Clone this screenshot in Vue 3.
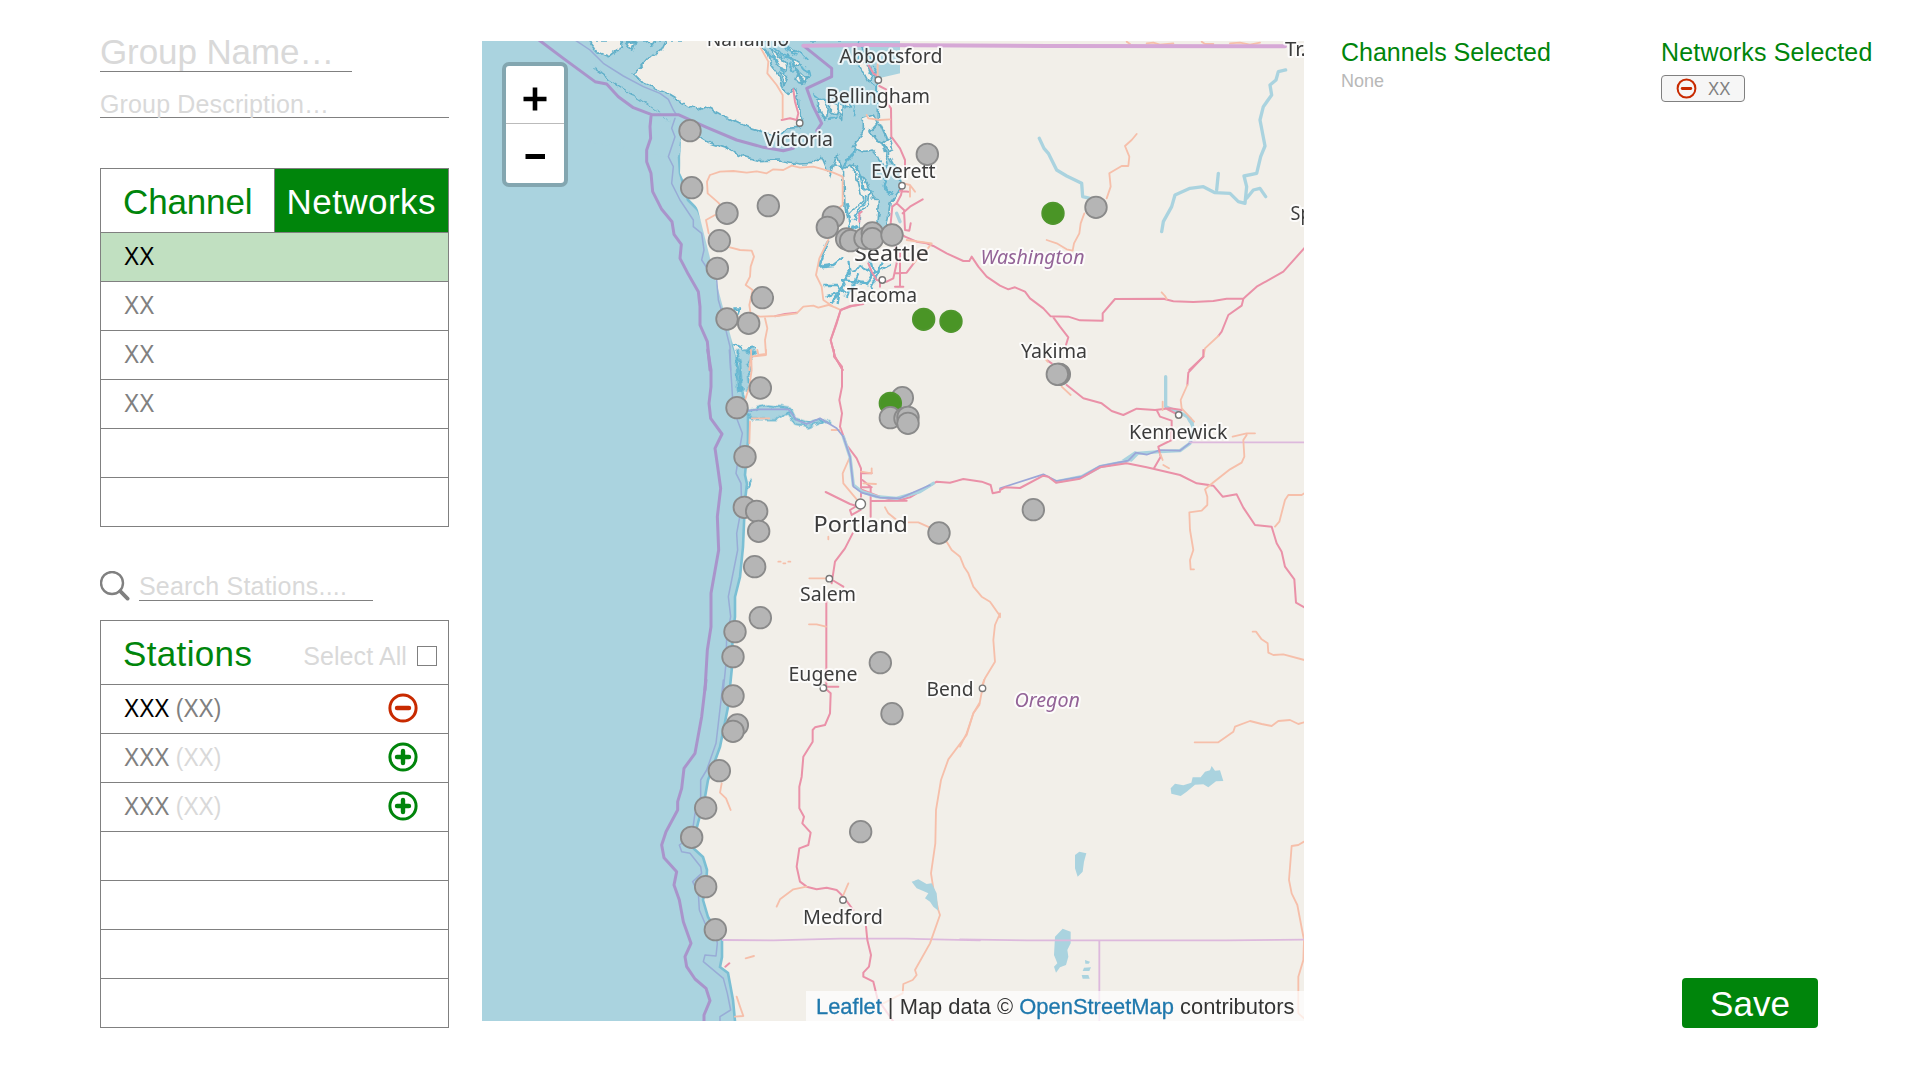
<script setup>
const networks = ['XX', 'XX', 'XX', 'XX', '', '']
const stations = [
  { code: 'XXX', net: '(XX)', on: true },
  { code: 'XXX', net: '(XX)', on: false },
  { code: 'XXX', net: '(XX)', on: false },
  null, null, null, null,
]

// Map sections: origin on the map canvas, geometry in thirds of a pixel
const sections = [
  {
    at: [480, 40],
    lines: [
      ['trunk', 'M1138 545V520L1145 515M1082 810L1070 850L1052 900L1065 950L1088 990M1082 810L1110 798L1135 795M905 240L930 235L950 240L955 220L945 185L940 148M885 829L915 822L950 818'],
      ['road', 'M840 20L865 65L862 100L890 135L908 165V235M683 460L681 425L690 405L720 395L760 393L800 398L830 394L860 400L880 388L910 390L935 377L960 383L1000 380L1030 388L1060 398L1088 410V495L1060 515M683 460L715 488L725 500M705 525L678 540L686 580M750 622L780 630L815 632L822 650L812 680L810 710L797 735L818 750L808 795L812 822L840 830L890 828L950 820L970 800L1000 797L1015 803L1045 795L1065 802L1082 810M1045 600L1018 655L1008 705L1025 740L1030 780L1060 800M855 835L862 865L855 900L858 945L830 948L812 950L808 990'],
      ['limit', 'M285 0L330 30L370 70L430 108L490 140L540 160L565 178L580 210L590 225M585 235L575 265L585 290L565 350L580 380L575 430L600 480L640 540L640 560L665 580L672 630L665 660L685 690M710 720L715 780L730 830L740 880L750 920L752 990'],
      ['border', 'M177 0L250 55L345 125L380 132L415 170L460 203L515 224H595L680 262L770 300L850 322L910 332L940 325M513 230L510 260L512 295L500 330V365L513 400L518 455L545 508L576 545L582 583L604 613L600 655L625 703L655 755L660 800V855L682 905L690 990'],
    ],
  },
  {
    at: [800, 40],
    lines: [
      ['trunk', 'M205 75L220 100L235 110M238 138L258 148L262 190L273 205L274 290L300 325L315 360V380M308 440L303 465L290 490L277 500L272 550L285 570L315 590M290 490L312 510L315 570M308 520L330 500L368 478M300 452L325 455M315 570L328 572L332 550M315 590L350 605L380 610L400 618L440 640L490 663H508L515 650L535 680L560 710L600 737L625 748L645 742L675 755L690 775L730 805L752 829L805 830L840 841L908 842V820L945 777L1090 776L1120 784L1180 786L1240 783L1280 776H1330L1370 740L1450 695L1515 622M760 832L780 860L805 892L798 915M1330 777L1325 797L1285 825L1265 875L1255 888M1210 950L1168 990M205 670L215 695L230 720L260 725L280 715L290 670L285 600M300 640V740M285 740H310M320 660L345 665L320 698L285 700M240 725V740M122 810L160 797L190 792M122 810L92 900L105 950L128 990'],
      ['road', 'M233 70V108M200 225L205 235L240 240L270 238M310 430L330 435L345 455M330 440V470M320 600L395 610L380 630L340 670M1010 282L995 300L975 318L988 350L985 378L965 378L928 400L932 440L920 475M853 520L842 550L838 580L822 610L818 632L800 628L770 610L740 600M1085 757L1095 768L1100 777M1255 888L1215 925L1210 950M980 5L990 12M1040 10L1060 8L1080 14L1120 10M1205 5L1215 12H1240M1290 10L1320 8L1350 14L1380 8'],
      ['river', 'M718 295L732 325L745 340L770 390L800 408L845 430L848 470L870 475M1457 90L1435 95L1428 120L1410 135L1415 165L1390 200L1380 240L1395 318L1382 350L1370 400L1332 408L1340 440L1335 490L1315 485L1290 460L1245 458L1210 440L1170 445L1125 465L1115 500L1090 545L1085 575M1255 400L1250 450M1340 475L1360 450L1380 445L1397 470M290 520L300 545'],
      ['border', 'M50 272L65 250L40 200L20 145L95 110V85L10 17'],
      ['state thick', 'M10 17L200 15L740 18L1455 19'],
    ],
  },
  {
    at: [680, 350],
    lines: [
      ['trunk', 'M462 0V20L486 50V110L478 150L486 190L480 230L500 285L530 325L543 355V440M545 370H575M547 390L572 410V500M547 420L600 440L650 452L690 442L770 395L810 398L850 387L905 395L932 405L938 430L960 425M545 412H575M575 453L680 452M437 426L510 462L530 468L510 480L515 495L542 480M518 550L495 595L465 635L455 700M457 690L490 710M439 755V1020'],
      ['road', 'M213 0L215 60L208 110L195 150M210 215L208 280M232 0L235 15L258 12V0M215 205L268 205M508 325L488 370L490 400L540 460M615 472L625 490L650 510M685 517H715L755 535M800 575L815 600L840 620L852 650L865 670L880 710L905 740L930 755L958 795L945 825L940 870L945 935L915 985L907 1005M388 685H440M387 823H410L438 830M543 365L575 370V355M550 400L588 402M455 240H480M445 560V568M295 635H302M310 640H316M325 635H331'],
      ['limit', 'M148 0L155 100L158 150L172 210L187 250L180 290L168 370L183 400L185 470L170 550L173 600L155 690L145 740L152 800L140 860L138 940L130 1020'],
      ['river', 'M490 260L510 320L520 405L545 425L590 440L650 445L720 425L760 400'],
      ['rivline', 'M205 182L240 178H325L350 210L380 222L420 205L470 235L490 260L510 320L520 410L545 428L600 443L660 445L750 405'],
      ['border', 'M83 0L93 60V110L87 160L92 205L126 252L105 295L113 350L122 415L112 500L116 600L93 730V830L82 900L75 1020'],
    ],
  },
  {
    at: [1000, 350],
    lines: [
      ['river', 'M497 80V170L545 190L570 205L580 235L570 280L540 302L480 305L410 310L375 335L300 350L245 380L170 395'],
      ['lake', 'M555 195L582 215L580 235L565 215ZM365 330L405 303L418 312L395 335Z'],
      ['rivline', 'M575 275L540 302L480 300L440 314L408 308L385 332L300 348L245 380L170 393L130 373L0 415'],
      ['state', 'M570 277H913'],
      ['trunk', 'M0 420L15 412L60 414L130 377L145 380L168 398L240 386L300 352L380 340L440 352L540 375L590 400L640 407L668 440L710 433L730 473L765 525L815 530L830 580L845 605L855 650L883 688L888 758L913 772M143 32L155 40M200 105L250 145L305 160L335 183L370 195L410 176L465 180L510 175L545 180M610 0V20L565 68L562 105M470 180L480 200L515 212V270L475 290L482 320L462 355M497 175L530 192'],
      ['road', 'M135 25L143 35M185 110L212 135M562 105L542 150L545 175L582 215M488 155V180M480 310L488 330M490 345L507 355M698 260L740 250H765M740 255L730 270L733 320L725 338L690 358L630 405L615 418L622 440V465L605 482L568 487L570 540L580 600L570 630L572 658H582M913 430L905 435H865L855 450L838 515L825 530M758 845H768L785 868L803 880L805 908L820 915L850 913L913 930M0 790V802'],
    ],
  },
  {
    at: [640, 680],
    lines: [
      ['state', 'M248 780L400 781L600 776H800L1020 781'],
      ['trunk', 'M550 20L572 40L570 100L555 135L525 142L518 150V185L490 230L485 290L478 320V385L492 410L487 430L512 458L505 495L478 505L470 560L480 605L500 620L530 628L560 623L590 630L610 650L640 690M550 20H595M678 740L682 780L693 825L687 860L670 878V890L700 905L712 955L760 1025M256 860L268 850'],
      ['road', 'M1018 70L1000 100L980 165L925 238L903 300L888 390L886 490L873 580L880 625L895 690L900 705L870 790L825 870L830 885L818 900L790 912L788 940L730 970M245 310L240 338L258 355L272 390M500 620L460 628L420 658L410 680M625 610L610 645M317 835L342 828M290 950L300 980L310 1008L285 1010'],
      ['limit', 'M250 0L235 130L228 190L200 270L182 300V350L165 400L155 470L118 495L125 515L150 520L182 560L185 580L158 605L175 640L178 690L195 730L225 755L232 790L228 828L195 825L190 845L250 895L262 940L272 990L240 1010V1025'],
      ['border', 'M198 0L185 110L165 220L132 265L125 325L113 365V390L78 455L65 495L72 533L110 575L102 615L118 660L130 725L153 790L135 830L140 860L165 897L198 925L210 962L192 1005V1025'],
      ['lake', 'M815 605L835 598L860 612L875 610L890 640L895 692L880 680L870 665L855 655L865 640L848 632L830 625Z'],
    ],
  },
  {
    at: [960, 680],
    lines: [
      ['road', 'M72 0L58 75L40 100L20 160L0 200M704 187H775L820 155L825 140L870 123L905 132L935 138L955 123L990 120L1015 132L1032 127M1032 485L1015 495L995 498L987 600L995 640L1012 675L1032 780L1030 840L1015 890V1000L1032 1015'],
      ['lake', 'M632 325L645 311L670 316L694 308L698 292L722 292L735 275L750 271L755 258L765 272L780 271L790 303L768 304L745 322L730 313L705 314L680 335L662 348L634 341Z'],
      ['lake', 'M345 525L358 515L379 520L372 545L368 575L353 590L345 565Z'],
      ['lake', 'M285 770L308 746L332 755V790L322 810L325 830L318 855L300 862L288 878L282 860L292 850L282 825Z'],
      ['lake', 'M375 840L390 845L386 851H376ZM372 863L393 862L388 873H368ZM365 885H385L389 896H368Z'],
      ['state', 'M0 778L200 781H800L1032 779M418 781V1025'],
    ],
  },
]

const coast = 'M482 41H1040L655 130L681 137L679 157L680 173L688 200L698 210L705 227L710 247L713 270L722 280L725 300L728 317L733 330L733 345L738 360L743 395L748 412L748 440L745 475L747 484L745 500L743 547L740 577L735 597L735 617L732 637L733 657L730 687L728 707L720 747L708 780L705 797L698 823L692 847L703 857L707 870L706 887L703 900L708 917L722 940L722 957L720 967L728 973L733 1000L735 1021H482Z'
const strait = 'M330 0H1135L1150 30L1130 60L1165 70L1175 105L1195 118V240L1218 290L1222 340L1260 410L1265 440L1230 490L1222 550L1212 600L1190 610L1180 560L1195 520L1160 430L1120 375L1090 385L1060 375L1050 408L1025 350L1000 370L960 372L900 360L840 362L790 350L740 325L690 310L640 280L600 290L540 220L330 80Z'

// Land inside the strait and the sound
const isles = [
  'M560 0L545 30L512 48L480 85L460 100L490 130L560 160L610 190L655 208L675 198L720 222L800 260L850 275L895 290L922 265L960 262L968 235L957 215L955 175L942 148L925 160L908 145L895 105L875 78L860 35L830 0Z',
  'M330 10L350 35L385 50L410 30L430 22L425 0H335Z',
  'M500 0L510 22L525 0Z', 'M440 8L455 30L465 5Z',
  'M870 25L915 65L920 90L895 80Z', 'M925 48L960 70L945 82Z', 'M900 95L925 110L912 135Z',
  'M950 88L985 118L970 125Z', 'M915 15L945 30L940 42Z', 'M955 100L965 130L948 125Z',
  'M1010 180L1030 175L1045 205L1040 235L1015 215Z', 'M1052 188L1072 198L1068 225L1050 218Z',
  'M1075 182L1090 190L1088 235L1072 222Z', 'M1100 170L1112 200L1100 205Z',
  'M1130 60L1148 45L1160 70L1175 110L1165 125Z',
  'M1150 235L1180 225L1193 250L1170 275L1188 300L1205 310L1225 370L1215 385L1198 350L1180 330L1150 335L1120 325L1150 265Z',
  'M1205 310L1230 290L1238 330L1222 335Z',
  'M1090 385L1110 375L1130 405L1148 480L1100 530L1095 500Z',
  'M1142 520L1165 490L1170 460L1195 490L1192 540L1180 590L1145 600L1140 560Z',
  'M1070 340L1085 380L1060 378Z',
]
const creeks = 'M1045 600L1018 680L1060 675L1090 652M1105 665L1110 700L1085 740L1055 790M1030 735H1070L1095 765M1040 768L1075 758L1070 795M1115 690L1150 680L1170 705L1200 690L1235 672M1085 720L1130 725L1165 730M1135 700L1120 730L1100 770M1170 660L1180 700L1160 735M1205 660L1195 700L1170 745M1100 490L1110 540L1100 575L1135 560M1160 470L1145 500L1120 540M760 805H780L775 825M760 915L790 930L825 925M790 930L800 960L795 990M775 945L770 980M1090 385L1110 350L1130 330M1130 375L1150 440L1180 460M1225 400L1210 440L1235 460'
const archipelago = 'M850 28L870 50L890 55L900 75M880 22L905 48L930 55L940 80M910 10L925 35L950 42M925 65L940 95L960 92M945 30L970 45L985 60M960 75L985 90L990 115M900 85L915 95L908 115M1000 160L1020 175L1050 185M1060 185L1095 180L1100 210M1050 235L1070 230M1110 165L1125 200L1120 230M1180 80L1190 95L1165 100M1170 130L1190 140L1185 170M1155 25L1165 50L1190 60'

const labels = [
  ['Nanaimo', 706.7, 46, 82.5, 19], ['Abbotsford', 839.5, 62.5, 103, 19], ['Bellingham', 826, 103, 104, 19],
  ['Victoria', 764, 145.8, 69, 19], ['Everett', 871, 177.8, 64.5, 19], ['Seattle', 854, 260.8, 75, 22.5],
  ['Tacoma', 847, 301.8, 70, 19], ['Yakima', 1021, 357.5, 66, 19], ['Kennewick', 1129, 438.7, 98.5, 19],
  ['Portland', 813.5, 532.3, 94.5, 22.5], ['Salem', 800, 600.7, 56, 19], ['Eugene', 788.5, 681.3, 69, 19],
  ['Bend', 926.5, 696, 47, 19], ['Medford', 803, 924, 80, 19],
  ['Tr.', 1285, 55.5, 21, 19], ['Sp', 1290.5, 220, 21, 19],
]
const regions = [['Washington', 980.5, 264, 104, 19], ['Oregon', 1014.5, 707, 65.5, 19]]
const towns = [[878.3, 80], [799.7, 123], [902, 185.7], [882.3, 280], [1178.7, 415], [829.3, 578.7], [823.3, 688], [982.5, 688.3], [843, 900]]

const pins = [
  { at: [480, 40], list: [[630, 272], [635, 443], [741, 520], [718, 602], [712, 685], [865, 497], [847, 773], [741, 837], [806, 850], [1060, 531], [1042, 562], [1100, 597], [1112, 602], [1155, 595], [1177, 579], [1177, 596], [1236, 585]] },
  { at: [800, 40], list: [[382, 343], [759, 520, 1], [888, 502], [371, 838, 1], [453, 844, 1]] },
  { at: [680, 350], list: [[241, 114], [171, 173], [195, 320], [193, 472], [230, 484], [236, 544], [224, 650], [241, 803], [165, 845], [159, 920], [667, 143], [631, 160, 1], [631, 203], [675, 205], [684, 202], [684, 220], [777, 549], [601, 938]] },
  { at: [1000, 350], list: [[178, 73], [176, 73], [172, 73], [100, 479]] },
  { at: [640, 680], list: [[279, 48], [292, 135], [279, 154], [238, 272], [197, 384], [155, 472], [197, 620], [226, 749], [756, 101], [662, 455]] },
].flatMap(g => g.list.map(([x, y, on]) => ({ x: g.at[0] + x / 3, y: g.at[1] + y / 3, on })))
</script>

<template>
  <main class="page">
    <aside class="side">
      <div class="field name"><span>Group Name…</span></div>
      <div class="field desc"><span>Group Description…</span></div>

      <section class="table networks">
        <div class="tabs">
          <div class="tab">Channel</div>
          <div class="tab active">Networks</div>
        </div>
        <div v-for="(n, i) in networks" :key="i" class="row" :class="{ selected: i === 0 }">
          <span class="code">{{ n }}</span>
        </div>
      </section>

      <div class="search">
        <svg width="30" height="30" viewBox="0 0 30 30" fill="none" stroke="#808080">
          <circle cx="12" cy="12" r="11" stroke-width="2.4" />
          <path d="M20.2 20.2L27.6 27.6" stroke-width="3.8" stroke-linecap="round" />
        </svg>
        <div class="field query"><span>Search Stations....</span></div>
      </div>

      <section class="table">
        <div class="head">
          <h2>Stations</h2>
          <span class="all">Select All</span>
          <i class="box"></i>
        </div>
        <div v-for="(s, i) in stations" :key="i" class="row" :class="{ on: s && s.on }">
          <template v-if="s">
            <span class="code">{{ s.code }}&nbsp;<em>{{ s.net }}</em></span>
            <svg class="toggle" width="30" height="30" viewBox="0 0 30 30" fill="none" :stroke="s.on ? '#c82a00' : '#00850b'">
              <circle cx="15" cy="15" r="13.1" stroke-width="3" />
              <path :d="s.on ? 'M9 15H21' : 'M9 15H21M15 9V21'" stroke-width="4.4" stroke-linecap="round" />
            </svg>
          </template>
        </div>
      </section>
    </aside>

    <section class="map">
      <svg class="canvas" width="822" height="980" viewBox="482 41 822 980">
        <defs>
          <filter id="ragged" x="-5%" y="-5%" width="110%" height="110%">
            <feTurbulence type="fractalNoise" baseFrequency="0.12" numOctaves="2" seed="4" result="n" />
            <feDisplacementMap in="SourceGraphic" in2="n" scale="7" xChannelSelector="R" yChannelSelector="G" />
          </filter>
        </defs>
        <rect x="482" y="41" width="822" height="980" fill="#f2efe9" />
        <path :d="coast" fill="#aad3df" />
        <path d="M655 132L681 137L679 157L680 173L688 200L698 210L705 227L710 247L713 270L722 280L725 300L728 317L733 330L733 345L738 360L743 395L748 412L748 440L745 475L747 484L745 500L743 547L740 577L735 597L735 617L732 637L733 657L730 687L728 707L720 747L708 780L705 797L698 823L692 847L703 857L707 870L706 887L703 900L708 917L722 940L722 957L720 967L728 973L733 1000L735 1021" class="shore" />
        <path d="M655 132L1050 41H900V430H760L748 400L733 345L713 270L698 210L680 173L681 137Z" fill="#f2efe9" />
        <g filter="url(#ragged)">
          <g transform="translate(480 40) scale(.33333)">
            <path :d="strait" class="coastline" />
            <path d="M-60 -60H340V90L540 220L605 285L597 350L560 350L300 300H-60Z" fill="#aad3df" />
            <path v-for="(d, i) in isles" :key="i" :d="d" class="isle" />
            <path :d="creeks" class="creek" />
            <path :d="archipelago" class="creek thin" />
          </g>
          <g transform="translate(680 350) scale(.33333)">
            <path d="M170 0H225L205 60L212 110L190 130L182 60Z" fill="#aad3df" />
            <path d="M168 0L180 40L185 125M200 0L225 10L205 40L210 110L195 125M170 45L178 128" class="creek" />
            <path d="M200 182L260 165L330 175L345 205L385 218L420 205L450 222L430 212L385 230L345 222L325 190L290 208L215 208Z" class="estuary" />
            <path d="M205 400L215 395L205 412" class="creek" />
          </g>
        </g>
        <g v-for="(s, i) in sections" :key="'s' + i" :transform="`translate(${s.at[0]} ${s.at[1]}) scale(.33333)`">
          <path v-for="(l, j) in s.lines" :key="j" :d="l[1]" :class="['line', l[0]]" />
        </g>
        <circle v-for="(t, i) in towns" :key="'t' + i" :cx="t[0]" :cy="t[1]" r="3.2" class="town" />
        <circle cx="860.5" cy="504" r="5" class="town" />
        <text v-for="l in labels" :key="l[0]" :x="l[1]" :y="l[2]" :textLength="l[3]" lengthAdjust="spacingAndGlyphs" :font-size="l[4]" class="label">{{ l[0] }}</text>
        <text v-for="l in regions" :key="l[0]" :x="l[1]" :y="l[2]" :textLength="l[3]" lengthAdjust="spacingAndGlyphs" :font-size="l[4]" class="label region">{{ l[0] }}</text>
        <circle v-for="(p, i) in pins" :key="'p' + i" :cx="p.x" :cy="p.y" r="10.8" class="pin" :class="{ on: p.on }" />
      </svg>
      <div class="zoom">
        <div><svg width="26" height="26" viewBox="0 0 26 26"><path d="M1.5 13H24.5M13 1.5V24.5" stroke="#000" stroke-width="4.6" /></svg></div>
        <div><svg width="26" height="26" viewBox="0 0 26 26"><path d="M3.5 12.5H23" stroke="#000" stroke-width="5" /></svg></div>
      </div>
      <div class="credit"><svg width="498" height="30"><text x="10" y="22.5" textLength="478.5" lengthAdjust="spacingAndGlyphs"><tspan class="link">Leaflet</tspan> | Map data © <tspan class="link">OpenStreetMap</tspan> contributors</text></svg></div>
    </section>

    <section class="picked">
      <div class="lists">
        <div class="list">
          <h3>Channels Selected</h3>
          <p>None</p>
        </div>
        <div class="list">
          <h3 class="wide">Networks Selected</h3>
          <div class="chip">
            <svg width="21" height="21" viewBox="0 0 21 21" fill="none" stroke="#c82a00">
              <ellipse cx="10.5" cy="10.5" rx="8.9" ry="9.1" stroke-width="2" />
              <path d="M6.2 10.5H14.8" stroke-width="2.8" stroke-linecap="round" />
            </svg>
            <span>XX</span>
          </div>
        </div>
      </div>
      <button class="save">Save</button>
    </section>
  </main>
</template>

<style>
body { background: #fff; }
</style>

<style scoped>
* { box-sizing: border-box; }
.page {
  display: flex;
  width: 1920px;
  height: 1080px;
  overflow: hidden;
  font-family: "Liberation Sans", Arial, sans-serif;
  font-size: 25px;
  color: #808080;
}
.side { width: 349px; margin-left: 100px; padding-top: 31px; }
.field { border-bottom: 1px solid #808080; color: #d9d9d9; white-space: nowrap; }
.name { width: 252px; height: 41px; font-size: 35px; line-height: 42px; letter-spacing: -0.1px; }
.desc { height: 46px; padding-top: 17px; line-height: 30px; letter-spacing: 0.15px; }
.table { border: 1px solid #808080; }
.networks { margin-top: 50px; }
.tabs, .head { display: flex; height: 63px; font-size: 35px; line-height: 66px; color: #00850b; }
.tab { width: 174px; padding-left: 22px; border-right: 1px solid #808080; white-space: nowrap; letter-spacing: -0.15px; }
.tab.active { background: #00850b; color: #fff; border: 0; padding-left: 12px; letter-spacing: 0.45px; }
.row {
  display: flex;
  justify-content: space-between;
  height: 49px;
  padding: 0 30px 0 23px;
  border-top: 1px solid #808080;
  line-height: 47px;
}
.selected { background: #c1e0c1; color: #000; }
.code { transform: scaleX(.91); transform-origin: 0 0; white-space: nowrap; }
.code em { font-style: normal; color: #d9d9d9; }
.on .code { color: #000; }
.on .code em { color: #808080; }
.toggle { margin-top: 8px; }
.search { display: flex; height: 30px; margin-top: 44px; }
.query { width: 234px; margin-left: 9px; line-height: 31px; letter-spacing: 0.2px; }
.search + .table { margin-top: 19px; }
.head { align-items: center; padding: 0 11px 0 22px; }
.head h2 { margin: 0; padding-top: 2px; font-size: 35px; font-weight: 400; line-height: 66px; letter-spacing: 0.35px; }
.all { margin-left: auto; font-size: 25px; line-height: 30px; padding-top: 6px; color: #d9d9d9; letter-spacing: 0.1px; }
.box { width: 20px; height: 20px; margin: 7px 0 0 10px; border: 1px solid #808080; }

.map { position: relative; width: 822px; height: 980px; margin: 41px 0 0 33px; overflow: hidden; }
.canvas { display: block; }
.shore { fill: none; stroke: #7bbfd4; stroke-width: 2.6; }
.coastline { fill: #aad3df; stroke: #62b0c9; stroke-width: 5; }
.isle { fill: #f2efe9; stroke: #62b0c9; stroke-width: 5; stroke-linejoin: round; }
.creek { fill: none; stroke: #62b5d0; stroke-width: 7; stroke-linejoin: round; }
.creek.thin { stroke-width: 5; }
.estuary { fill: #aad3df; stroke: #62b5d0; stroke-width: 5; }
.line { fill: none; stroke-linejoin: round; stroke-linecap: round; }
.trunk { stroke: #ea91a8; stroke-width: 6; }
.road { stroke: #f6bfaa; stroke-width: 5.5; }
.limit { stroke: #98acd6; stroke-width: 4.5; }
.border { stroke: #a994cb; stroke-width: 9; }
.state { stroke: #ddb9dd; stroke-width: 5.5; }
.state.thick { stroke: #d6a8d6; stroke-width: 12; }
.river { stroke: #aad3df; stroke-width: 10; }
.rivline { stroke: #9ba6d8; stroke-width: 5; }
.lake { fill: #aad3df; }
.town { fill: #fff; stroke: #777; stroke-width: 1.4; }
.label {
  font-family: "Noto Sans", sans-serif;
  fill: #3c3c3c;
  stroke: rgba(255, 255, 255, .75);
  stroke-width: 4px;
  stroke-linejoin: round;
  paint-order: stroke;
}
.region { fill: #936397; font-style: italic; }
.pin { fill: #b5b5b5; stroke: #8a8a8a; stroke-width: 1.8; }
.pin.on { fill: #4a9526; stroke: #4f962d; }
.zoom {
  position: absolute;
  left: 20px;
  top: 21px;
  width: 66px;
  height: 125px;
  border: 4px solid #83a6b0;
  border-radius: 7px;
  background: #fff;
}
.zoom div { display: flex; align-items: center; justify-content: center; height: 58px; padding-top: 9px; }
.zoom div:first-child { border-bottom: 1px solid #bbb; }
.zoom div:last-child { padding-top: 8px; }
.credit {
  position: absolute;
  right: 0;
  bottom: 0;
  width: 498px;
  height: 30px;
  background: rgba(255, 255, 255, .7);
}
.credit svg { display: block; }
.credit text { font-size: 21.5px; fill: #333; }
.credit .link { fill: #1f78ad; stroke: #1f78ad; stroke-width: .3px; }

.picked { display: flex; flex-direction: column; justify-content: space-between; width: 579px; margin-left: 37px; padding: 38px 0 52px; }
.lists { display: flex; }
.list { width: 320px; flex: none; }
.list h3 { margin: 0; font-size: 25px; font-weight: 400; line-height: 29px; color: #00850b; white-space: nowrap; }
.list h3.wide { letter-spacing: 0.18px; }
.list p { margin: 4px 0 0; font-size: 18px; line-height: 21px; color: #b8b8b8; }
.chip {
  display: flex;
  align-items: center;
  gap: 11px;
  width: 84px;
  height: 27px;
  margin-top: 8px;
  padding-left: 14px;
  border: 1px solid #808080;
  border-radius: 4px;
  background: #f6f6f6;
  font-size: 18px;
}
.chip span { transform: scaleX(.93); transform-origin: 0 0; padding-top: 1px; }
.save {
  width: 136px;
  height: 50px;
  margin-left: 341px;
  padding: 1px 0 0;
  border: 0;
  border-radius: 4px;
  background: #00850b;
  color: #fff;
  font: 35px/47px "Liberation Sans", Arial, sans-serif;
}
</style>
